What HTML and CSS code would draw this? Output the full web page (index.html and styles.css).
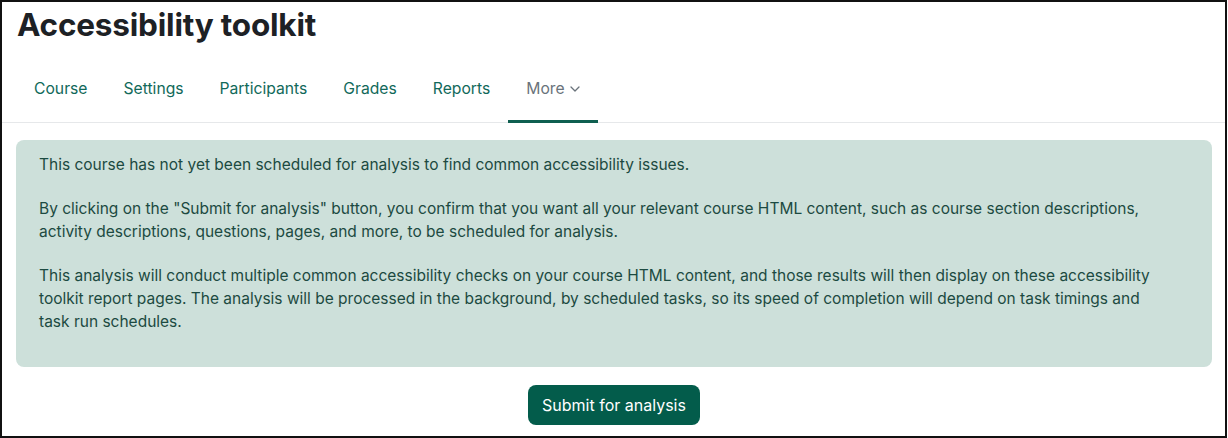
FILE: index.html
```html
<!DOCTYPE html>
<html>
<head>
<meta charset="utf-8">
<link rel="stylesheet" href="styles.css">
</head>
<body>
<div class="frame">
  <h1 class="title">Accessibility toolkit</h1>
  <nav class="tabs">
    <a class="tab">Course</a>
    <a class="tab">Settings</a>
    <a class="tab">Participants</a>
    <a class="tab">Grades</a>
    <a class="tab">Reports</a>
    <a class="tab active">More <svg class="chev" width="10" height="6" viewBox="0 0 10 6"><path d="M1 1l4 4 4-4" fill="none" stroke="currentColor" stroke-width="1.3" stroke-linecap="round" stroke-linejoin="round"/></svg></a>
  </nav>
  <div class="content">
    <div class="alert">
      <p>This course has not yet been scheduled for analysis to find common accessibility issues.</p>
      <p>By clicking on the "Submit for analysis" button, you confirm that you want all your relevant course HTML content, such as course section descriptions, activity descriptions, questions, pages, and more, to be scheduled for analysis.</p>
      <p>This analysis will conduct multiple common accessibility checks on your course HTML content, and those results will then display on these accessibility toolkit report pages. The analysis will be processed in the background, by scheduled tasks, so its speed of completion will depend on task timings and task&nbsp;run schedules.</p>
    </div>
    <div class="actions">
      <button class="btn">Submit for analysis</button>
    </div>
  </div>
</div>
</body>
</html>
```
FILE: styles.css
```css
html, body { margin: 0; padding: 0; background: #fff; }
body { font-family: Inter, "Noto Sans", sans-serif; }
.frame {
  width: 1227px;
  height: 438px;
  box-sizing: border-box;
  border: 2px solid #111;
  overflow: hidden;
}
.title {
  margin: 0;
  padding: 5px 0 0 15px;
  font-size: 31.5px;
  line-height: 36px;
  font-weight: 700;
  color: #1d2125;
  letter-spacing: -0.2px;
}
.tabs {
  display: flex;
  margin-top: 23px;
  padding-left: 14px;
  border-bottom: 1px solid #e6e8ea;
}
.tab {
  display: flex;
  align-items: center;
  gap: 5px;
  padding: 0 18px 10px 18px;
  height: 57px;
  box-sizing: border-box;
  font-size: 15.7px;
  color: #11695a;
  border-bottom: 3px solid transparent;
  margin-bottom: -1px;
}
.tab.active {
  color: #6a737b;
  border-bottom-color: #0f5f50;
}
.chev { margin-top: 1px; }
.content {
  padding: 17px 13px 0 14px;
}
.alert {
  background: #cde0da;
  border-radius: 8px;
  padding: 13px 23px 13px 23px;
  color: #1c4a41;
  font-size: 15.5px;
  line-height: 23px;
}
.alert p { margin: 0 0 21px 0; }
.actions {
  display: flex;
  justify-content: center;
  padding-top: 18px;
}
.btn {
  font-family: Inter, "Noto Sans", sans-serif;
  font-size: 16px;
  color: #fff;
  background: #035c4b;
  border: none;
  border-radius: 8px;
  height: 40px;
  padding: 0 14px;
}
```
